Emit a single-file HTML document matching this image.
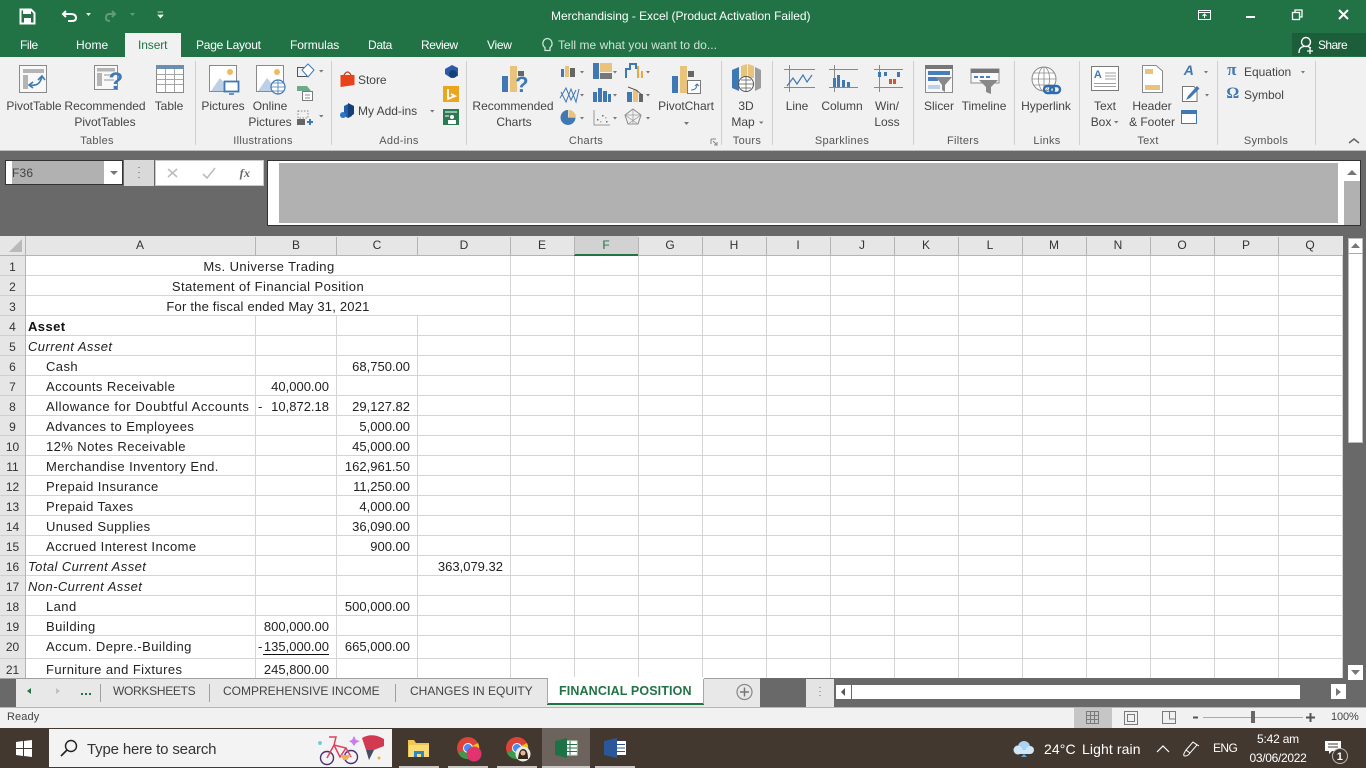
<!DOCTYPE html>
<html><head><meta charset="utf-8"><title>Merchandising - Excel</title>
<style>
html,body{margin:0;padding:0;width:1366px;height:768px;overflow:hidden;background:#696969}
body{position:relative;font-family:"Liberation Sans",sans-serif;font-size:13px;color:#222}
.b{position:absolute}
.t{position:absolute;white-space:nowrap;height:20px;line-height:20px;letter-spacing:.42px}
.c{transform:translateX(-50%)}
.w{color:#fff}
.r{font-size:12px;letter-spacing:-.02px;color:#444}
.g{font-size:11px;letter-spacing:.3px;color:#555}
.n{right:0;letter-spacing:0}
.B{right:1037px}.C{right:956px}.D{right:863px}
.ch{font-size:12px;color:#333;letter-spacing:0;top:235px}
.rh{font-size:12px;color:#333;left:0;width:25px;text-align:center;letter-spacing:0}
.tab{font-size:12px;color:#444;top:681px;letter-spacing:0}
svg{position:absolute;left:0;top:0}
</style></head><body>
<div class="b" style="left:0;top:0;width:1366px;height:57px;background:#217346"></div>
<div class="b" style="left:1292px;top:33px;width:74px;height:23px;background:#1d5e3a"></div>
<div class="b" style="left:125px;top:33px;width:56px;height:24px;background:#f1f1f1"></div>
<div class="b" style="left:0;top:57px;width:1366px;height:93px;background:#f1f1f1"></div>
<div class="b" style="left:0;top:150px;width:1366px;height:1px;background:#bdbdbd"></div>
<!-- formula bar -->
<div class="b" style="left:5px;top:160px;width:118px;height:25px;box-sizing:border-box;border:1px solid #333;background:#fff"></div>
<div class="b" style="left:12px;top:161px;width:92px;height:23px;background:#b1b1b1"></div>
<div class="b" style="left:124px;top:160px;width:30px;height:26px;background:#d9d9d9"></div>
<div class="b" style="left:155px;top:160px;width:109px;height:26px;background:#fff;box-shadow:0 0 0 1px #c8c8c8 inset"></div>
<div class="b" style="left:267px;top:160px;width:1094px;height:66px;box-sizing:border-box;border:1px solid #333;background:#fff"></div>
<div class="b" style="left:279px;top:163px;width:1059px;height:60px;background:#b1b1b1"></div>
<div class="b" style="left:1344px;top:181px;width:16px;height:44px;background:#b1b1b1"></div>
<!-- sheet -->
<div class="b" style="left:0;top:236px;width:1343px;height:19px;background:#e6e6e6"></div>
<div class="b" style="left:574px;top:236px;width:64px;height:18px;background:#d2d2d2"></div>
<div class="b" style="left:574px;top:254px;width:64px;height:2px;background:#217346"></div>
<div class="b" style="left:0;top:255px;width:25px;height:423px;background:#e6e6e6"></div>
<div class="b" style="left:25px;top:256px;width:1318px;height:422px;background:#fff"></div>
<svg width="1366" height="768" viewBox="0 0 1366 768" shape-rendering="crispEdges">
<g stroke="#d4d4d4" stroke-width="1" fill="none">
<path d="M25 275.5H1343M25 295.5H1343M25 315.5H1343M25 335.5H1343M25 355.5H1343M25 375.5H1343M25 395.5H1343M25 415.5H1343M25 435.5H1343M25 455.5H1343M25 475.5H1343M25 495.5H1343M25 515.5H1343M25 535.5H1343M25 555.5H1343M25 575.5H1343M25 595.5H1343M25 615.5H1343M25 635.5H1343M25 658.5H1343"/>
<path d="M255.5 316V678M336.5 316V678M417.5 316V678M510.5 256V678M574.5 256V678M638.5 256V678M702.5 256V678M766.5 256V678M830.5 256V678M894.5 256V678M958.5 256V678M1022.5 256V678M1086.5 256V678M1150.5 256V678M1214.5 256V678M1278.5 256V678M1342.5 256V678"/>
</g>
<g stroke="#b4b4b4" fill="none">
<path d="M0 255.5H574M638 255.5H1343M25.5 236V678"/>
<path d="M255.5 237V255M336.5 237V255M417.5 237V255M510.5 237V255M574.5 237V255M638.5 237V255M702.5 237V255M766.5 237V255M830.5 237V255M894.5 237V255M958.5 237V255M1022.5 237V255M1086.5 237V255M1150.5 237V255M1214.5 237V255M1278.5 237V255"/>
<path d="M0 275.5H25M0 295.5H25M0 315.5H25M0 335.5H25M0 355.5H25M0 375.5H25M0 395.5H25M0 415.5H25M0 435.5H25M0 455.5H25M0 475.5H25M0 495.5H25M0 515.5H25M0 535.5H25M0 555.5H25M0 575.5H25M0 595.5H25M0 615.5H25M0 635.5H25M0 658.5H25" stroke="#cfcfcf"/>
</g>
<path d="M263 654.5H329" stroke="#111" stroke-width="1"/>
<g shape-rendering="auto"><path d="M9 252L22 239V252Z" fill="#b9b9b9"/></g>
</svg>
<!-- v scrollbar -->
<div class="b" style="left:1348px;top:238px;width:15px;height:205px;background:#fff;box-shadow:0 0 0 1px #bbb inset"></div>
<div class="b" style="left:1348px;top:253px;width:15px;height:1px;background:#aaa"></div>
<div class="b" style="left:1348px;top:665px;width:15px;height:15px;background:#fff"></div>
<!-- tab bar -->
<div class="b" style="left:0;top:678px;width:760px;height:1px;background:#a0a0a0"></div>
<div class="b" style="left:16px;top:679px;width:744px;height:28px;background:#e8e8e8"></div>
<div class="b" style="left:548px;top:677px;width:156px;height:26px;background:#fff"></div>
<div class="b" style="left:547px;top:703px;width:157px;height:2px;background:#217346"></div>
<div class="b" style="left:547px;top:679px;width:1px;height:25px;background:#a8a8a8"></div>
<div class="b" style="left:703px;top:679px;width:1px;height:25px;background:#a8a8a8"></div>
<div class="b" style="left:806px;top:679px;width:28px;height:28px;background:#e4e4e4"></div>
<div class="b" style="left:836px;top:685px;width:15px;height:14px;background:#fff"></div>
<div class="b" style="left:852px;top:685px;width:448px;height:14px;background:#fff"></div>
<div class="b" style="left:1331px;top:684px;width:15px;height:15px;background:#fff"></div>
<div class="b" style="left:0;top:707px;width:1366px;height:21px;background:#f1f1f1;border-top:1px solid #b5b5b5;box-sizing:border-box"></div>
<div class="b" style="left:1074px;top:708px;width:38px;height:20px;background:#c6c6c6"></div>
<!-- taskbar -->
<div class="b" style="left:0;top:728px;width:1366px;height:40px;background:#43382f"></div>
<div class="b" style="left:49px;top:729px;width:343px;height:38px;background:#f3f3f3"></div>
<div class="b" style="left:542px;top:728px;width:48px;height:40px;background:#6b635c"></div>
<div class="b" style="left:399px;top:766px;width:40px;height:2px;background:#c9c6c4"></div>
<div class="b" style="left:448px;top:766px;width:40px;height:2px;background:#c9c6c4"></div>
<div class="b" style="left:497px;top:766px;width:40px;height:2px;background:#c9c6c4"></div>
<div class="b" style="left:542px;top:766px;width:48px;height:2px;background:#c9c6c4"></div>
<div class="b" style="left:595px;top:766px;width:40px;height:2px;background:#c9c6c4"></div>

<svg width="1366" height="768" viewBox="0 0 1366 768">
<!-- QAT -->
<path d="M20.5 9.5H31L34.5 13V23.5H20.5Z" fill="none" stroke="#fff" stroke-width="2"/><rect x="23" y="9" width="8" height="5" fill="#fff"/><rect x="24" y="18" width="7" height="5" fill="#fff"/>
<path d="M66 11L63 14L66 17M63.5 14H71Q76 14 76 18Q76 21 72 21H68" fill="none" stroke="#fff" stroke-width="2"/>
<path d="M86 13H91L88.5 16Z" fill="#e6f0ea"/>
<path d="M112 11L115 14L112 17M114 14H109Q106 14 106 18Q106 21 110 21" fill="none" stroke="#5f9c79" stroke-width="2"/>
<path d="M130 13H135L132.5 16Z" fill="#5f9c79"/>
<path d="M157.5 12H163M158 15H163L160.5 18Z" fill="#fff" stroke="#fff" stroke-width=".7"/>
<!-- Tell me bulb -->
<path d="M547 38.5a5 5 0 0 1 3 9v3h-5v-3a5 5 0 0 1 2-9z" fill="none" stroke="#cfe3d6" stroke-width="1.3"/>
<!-- window controls -->
<rect x="1198.5" y="10.5" width="12" height="9" fill="none" stroke="#fff"/><path d="M1198 12.5H1211" stroke="#fff"/><path d="M1204.5 18V14M1202.5 16L1204.5 14L1206.5 16" stroke="#fff" fill="none"/>
<rect x="1246" y="16" width="9" height="2" fill="#fff"/>
<rect x="1292.5" y="12.5" width="7" height="7" fill="none" stroke="#fff" stroke-width="1.3"/><path d="M1295 12V10H1302V17H1300" fill="none" stroke="#fff" stroke-width="1.3"/>
<path d="M1339 10L1348 19M1348 10L1339 19" stroke="#fff" stroke-width="2"/>
<circle cx="1306" cy="42" r="4.5" fill="none" stroke="#fff" stroke-width="1.4"/><path d="M1299 53Q1299 47 1304 46.5M1308 46.5L1311 48M1307 51H1313M1310 48V54" fill="none" stroke="#fff" stroke-width="1.3"/>

<!-- separators -->
<g stroke="#d0d0d0"><path d="M195.5 61V145M331.5 61V145M466.5 61V145M721.5 61V145M772.5 61V145M913.5 61V145M1014.5 61V145M1079.5 61V145M1217.5 61V145M1315.5 61V145"/></g>

<!-- PivotTable -->
<rect x="19.5" y="65.5" width="27" height="27" fill="#f8f8f8" stroke="#8a8a8a"/><rect x="23" y="69" width="21" height="4" fill="#b4b4b4"/><rect x="23" y="75" width="5" height="14" fill="#b4b4b4"/>
<path d="M30 85Q40 87 42 76M38 80L42 76L45 80M33 82L29 85L33 88" fill="none" stroke="#3f78b3" stroke-width="1.6"/>
<!-- Recommended pivot -->
<rect x="94.5" y="65.5" width="23" height="24" fill="#f8f8f8" stroke="#8a8a8a"/><rect x="97" y="68" width="18" height="3.5" fill="#b4b4b4"/><rect x="97" y="73" width="5" height="13" fill="#b4b4b4"/><rect x="104" y="74" width="10" height="2" fill="#c7c7c7"/><rect x="104" y="79" width="10" height="2" fill="#c7c7c7"/>
<!-- Table -->
<rect x="156.5" y="65.5" width="27" height="27" fill="#fff" stroke="#8a8a8a"/><rect x="156" y="65" width="28" height="4" fill="#6a8fb0"/><path d="M157 74.5H183M157 79.5H183M157 84.5H183M165.5 69V92M174.5 69V92" stroke="#a5a5a5"/>
<!-- Pictures -->
<rect x="209.5" y="65.5" width="27" height="26" fill="#fff" stroke="#8a8a8a"/><circle cx="230" cy="72" r="3" fill="#eebb63"/><path d="M211 91L220 78L231 91Z" fill="#bcd0e6"/><rect x="224.5" y="81.5" width="14" height="10" fill="#fff" stroke="#3f78b3" stroke-width="1.8"/><path d="M229 94H234" stroke="#3f78b3" stroke-width="1.5"/>
<!-- Online -->
<rect x="256.5" y="65.5" width="27" height="26" fill="#fff" stroke="#8a8a8a"/><circle cx="277" cy="72" r="3" fill="#eebb63"/><path d="M258 91L267 78L278 91Z" fill="#bcd0e6"/><circle cx="278" cy="87" r="7" fill="#fff" stroke="#3f78b3" stroke-width="1.2"/><path d="M271 87H285M278 80V94M272.5 83H283.5M272.5 91H283.5" stroke="#3f78b3" stroke-width=".8" fill="none"/>
<!-- Shapes etc -->
<rect x="297.5" y="67.5" width="9" height="9" fill="none" stroke="#555"/><path d="M308 64L314 70L308 77L302 70Z" fill="#fff" stroke="#3f78b3"/><path d="M319 70H323.5L321.25 72.5Z" fill="#777"/>
<path d="M297 86H307L311 91H297Z" fill="#6ea98b"/><rect x="302.5" y="91.5" width="10" height="9" fill="#fff" stroke="#7a7a7a"/><path d="M305 95H310M305 98H310" stroke="#888"/>
<rect x="298" y="111" width="10" height="7" fill="none" stroke="#888" stroke-dasharray="1.5 1.5"/><rect x="297" y="119" width="8" height="6" fill="#666"/><path d="M307 122H313M310 119V125" stroke="#3f78b3" stroke-width="2"/><path d="M319 115H323.5L321.25 117.5Z" fill="#777"/>
<!-- Store -->
<path d="M340.5 75H354.5V85L340.5 87Z" fill="#e8421c"/><path d="M344 75Q347.5 69 351 75" fill="none" stroke="#c53a18" stroke-width="1.3"/>
<path d="M344 106L348 104V110L352 112L352 116L348 118L344 116Z" fill="#1f5fa8"/><circle cx="343" cy="115" r="3" fill="#2977c9"/><path d="M348 103L354 106V114L348 118Z" fill="#173f77"/>
<path d="M430 110H434.5L432.25 112.5Z" fill="#777"/>
<path d="M445 69L452 65L458 68V76L451 78L445 74Z" fill="#2a5aa8"/><circle cx="453" cy="74" r="4" fill="#173f77"/>
<rect x="443" y="86" width="16" height="16" fill="#eba620"/><path d="M448 89V99L455 96L451 94" fill="none" stroke="#fff" stroke-width="1.8"/>
<rect x="443" y="109" width="16" height="16" fill="#2c7a52"/><circle cx="452" cy="117" r="2" fill="#fff"/><path d="M448 124V120H456V124" fill="#fff"/><path d="M445 112H457M445 116H449" stroke="#fff"/>
<!-- Recommended Charts -->
<rect x="502" y="76" width="6" height="16" fill="#3f78b3"/><rect x="510" y="66" width="7" height="26" fill="#e9c27b"/><rect x="518" y="71" width="6" height="5" fill="#666"/>
<!-- small chart icons -->
<rect x="561" y="69" width="3" height="8" fill="#3f78b3"/><rect x="565" y="66" width="4" height="11" fill="#e9c27b"/><rect x="570" y="68" width="5" height="9" fill="#666"/>
<path d="M580 71H584L582 73.5Z" fill="#777"/>
<rect x="593" y="63" width="6" height="16" fill="#3f78b3"/><rect x="600" y="63" width="12" height="9" fill="#e9c27b"/><rect x="600" y="73" width="12" height="6" fill="#777"/>
<path d="M613 71H617L615 73.5Z" fill="#777"/>
<path d="M626 78V69H630V64H636V69" fill="none" stroke="#3f78b3" stroke-width="2"/><path d="M638 66V78M642 71V78" stroke="#e9a93f" stroke-width="2"/><path d="M646 71H650L648 73.5Z" fill="#777"/>
<path d="M561 92L566 102L571 89L576 102L579 89M560 98L566 88L571 100L576 90" fill="none" stroke="#3f78b3"/><path d="M580 94H584L582 96.5Z" fill="#777"/>
<rect x="593" y="92" width="4" height="10" fill="#3f78b3"/><rect x="598" y="88" width="4" height="14" fill="#3f78b3"/><rect x="603" y="91" width="4" height="11" fill="#3f78b3"/><rect x="608" y="94" width="3" height="8" fill="#3f78b3"/><path d="M613 94H617L615 96.5Z" fill="#777"/>
<rect x="627" y="92" width="5" height="10" fill="#3f78b3"/><rect x="633" y="90" width="5" height="12" fill="#e9c27b"/><rect x="639" y="94" width="4" height="8" fill="#666"/><path d="M628 87L636 90L642 95" fill="none" stroke="#555"/><path d="M646 94H650L648 96.5Z" fill="#777"/>
<path d="M568 110A7.5 7.5 0 1 0 575.5 117.5H568Z" fill="#3f78b3"/><path d="M568.5 110A7.5 7.5 0 0 1 576 117H568.5Z" fill="#e9c27b"/><path d="M580 117H584L582 119.5Z" fill="#777"/>
<path d="M594 110V125H610" fill="none" stroke="#999"/><g fill="#3f78b3"><rect x="597" y="119" width="1.5" height="1.5"/><rect x="602" y="115" width="1.5" height="1.5"/><rect x="606" y="121" width="1.5" height="1.5"/></g><g fill="#e9a93f"><rect x="600" y="121" width="1.5" height="1.5"/><rect x="605" y="117" width="1.5" height="1.5"/></g><path d="M613 117H617L615 119.5Z" fill="#777"/>
<path d="M633 109L641 115L638 124H628L625 115Z" fill="none" stroke="#888"/><path d="M633 109V124M625 115L641 115M628 124L638 124M628 124L641 115M638 124L625 115" stroke="#999" stroke-width=".7" fill="none"/><path d="M646 117H650L648 119.5Z" fill="#777"/>
<!-- PivotChart -->
<rect x="672" y="76" width="6" height="17" fill="#3f78b3"/><rect x="680" y="66" width="7" height="27" fill="#e9c27b"/><rect x="688" y="71" width="6" height="6" fill="#666"/><rect x="687.5" y="80.5" width="13" height="13" fill="#fff" stroke="#7a7a7a"/><path d="M691 90Q697 90 697 84M695 86L697 84L699 86" stroke="#3f78b3" fill="none"/>
<path d="M684 122H689L686.5 125Z" fill="#777"/>
<!-- 3D map -->
<path d="M732 70L739 67V91L732 88Z" fill="#3f78b3"/><path d="M741 66L747 64V78H741Z" fill="#e9c27b"/><path d="M748 64L754 66V78H748Z" fill="#e9c27b"/><path d="M755 67L761 70V88L755 91Z" fill="#9c9c9c"/><circle cx="746" cy="84" r="7.5" fill="#fff" stroke="#555"/><path d="M739 84H753M746 77V91M741 80H751M741 88H751" stroke="#555" stroke-width=".7"/>
<path d="M759 121.5H763.5L761.25 124Z" fill="#777"/>
<!-- Sparklines -->
<g stroke="#888" fill="none"><path d="M784 69.5H815M784 87.5H815M789.5 65V92M829 69.5H858M829 87.5H858M834.5 65V92M874 69.5H903M874 87.5H903M879.5 65V92"/></g>
<path d="M787 86L793 78L797 84L803 75L807 82L812 75" fill="none" stroke="#3f78b3" stroke-width="1.2"/>
<g fill="#3f78b3"><rect x="833" y="78" width="3" height="9"/><rect x="837" y="75" width="3" height="12"/><rect x="842" y="80" width="3" height="7"/><rect x="847" y="82" width="3" height="5"/></g>
<g fill="#3f78b3"><rect x="878" y="72" width="3" height="5"/><rect x="884" y="72" width="3" height="4"/><rect x="897" y="72" width="3" height="5"/></g><g fill="#c8593a"><rect x="889" y="79" width="3" height="5"/><rect x="893" y="79" width="3" height="5"/></g>
<!-- Slicer -->
<rect x="925.5" y="65.5" width="27" height="27" fill="#f8f8f8" stroke="#8a8a8a"/><rect x="925" y="65" width="28" height="4" fill="#777"/><rect x="928" y="71" width="22" height="4" fill="#4a7ebb"/><rect x="928" y="77" width="10" height="4" fill="#4a7ebb"/><rect x="928" y="85" width="12" height="4" fill="#bcd0e6"/><path d="M936 77H952L945 85V92L942 90V85Z" fill="#888"/>
<!-- Timeline -->
<rect x="971" y="69" width="28" height="14" fill="#f8f8f8" stroke="#8a8a8a"/><rect x="971" y="69" width="28" height="4" fill="#777"/><path d="M974 77H978M980 77H984M986 77H990" stroke="#4a7ebb" stroke-width="2"/><path d="M979 80H998L991 87V94L986 92V87Z" fill="#888"/>
<!-- Hyperlink -->
<circle cx="1044" cy="79" r="12" fill="#fff" stroke="#8a8a8a"/><path d="M1032 79H1056M1044 67V91M1034 73H1054M1034 85H1054" stroke="#8a8a8a" stroke-width=".8"/><ellipse cx="1044" cy="79" rx="5.5" ry="12" fill="none" stroke="#8a8a8a" stroke-width=".8"/>
<rect x="1044" y="86" width="10" height="7" rx="3.5" fill="none" stroke="#2d6cb0" stroke-width="2.4"/><rect x="1050" y="86" width="10" height="7" rx="3.5" fill="none" stroke="#2d6cb0" stroke-width="2.4"/>
<!-- Text box -->
<rect x="1091.5" y="66.5" width="27" height="24" fill="#fff" stroke="#7a7a7a"/><path d="M1105 73H1116M1105 76H1116M1105 79H1116M1094 83.5H1116M1094 86.5H1116" stroke="#a0a0a0"/>
<path d="M1114 121H1118.5L1116.25 123.5Z" fill="#777"/>
<!-- Header footer -->
<path d="M1142.5 65.5H1156L1162.5 71V92.5H1142.5Z" fill="#fff" stroke="#8a8a8a"/><rect x="1145" y="69" width="8" height="5" fill="#e9c27b"/><rect x="1145" y="85" width="15" height="5" fill="#e9c27b"/>
<path d="M1204 71H1208L1206 73.5Z" fill="#777"/>
<path d="M1182.5 86.5H1194L1197 90V101.5H1182.5Z" fill="#fff" stroke="#777"/><path d="M1186 100L1188 96L1197 86L1199.5 88.5L1190 98Z" fill="#3f78b3"/><path d="M1205 94H1209L1207 96.5Z" fill="#777"/>
<rect x="1181.5" y="110.5" width="15" height="13" fill="#fff" stroke="#3f78b3"/><rect x="1181" y="110" width="16" height="4" fill="#3f78b3"/>
<path d="M1301 71H1305L1303 73.5Z" fill="#777"/>
<path d="M1349 143L1354 139L1359 143" fill="none" stroke="#666" stroke-width="1.5"/>
<!-- dialog launcher -->
<path d="M711 139H716M711 139V144M713 141L717 145M717 142V145H714" stroke="#888" fill="none"/>
<!-- name box arrows & fx -->
<path d="M110 171H118L114 175Z" fill="#777"/>
<path d="M139 167V168M139 172V173M139 177V178" stroke="#999" stroke-width="2"/>
<path d="M168 169L177 177M177 169L168 177" stroke="#bdbdbd" stroke-width="1.6"/>
<path d="M203 174L207 178L215 168" stroke="#bdbdbd" stroke-width="1.6" fill="none"/>
<path d="M1347 175L1352 170L1357 175Z" fill="#777"/>
<!-- sheet scroll arrows -->
<path d="M1351 248L1355.5 243L1360 248Z" fill="#777"/><path d="M1351 670L1355.5 675L1360 670Z" fill="#777"/>
<!-- tab nav -->
<path d="M31 688V694L27 691Z" fill="#217346"/><path d="M56 688V694L60 691Z" fill="#c0c0c0"/>
<g fill="#217346"><rect x="81" y="693" width="2" height="2"/><rect x="85" y="693" width="2" height="2"/><rect x="89" y="693" width="2" height="2"/></g>
<path d="M100.5 684V702M209.5 684V702M395.5 684V702" stroke="#a0a0a0"/>
<circle cx="744.5" cy="692" r="7.5" fill="none" stroke="#888" stroke-width="1.2"/><path d="M740 692H749M744.5 687.5V696.5" stroke="#777" stroke-width="1.5"/>
<path d="M820 687V688M820 691V692M820 695V696" stroke="#999" stroke-width="1.5"/>
<path d="M845 688V696L841 692Z" fill="#555"/><path d="M1336 688V696L1341 692Z" fill="#777"/>
<!-- status -->
<g stroke="#7a7a7a" fill="none" shape-rendering="crispEdges"><rect x="1086.5" y="711.5" width="12" height="12"/><path d="M1086 715.5H1099M1086 719.5H1099M1090.5 711V724M1094.5 711V724"/>
<rect x="1124.5" y="711.5" width="13" height="13"/><rect x="1127.5" y="714.5" width="7" height="7"/>
<rect x="1162.5" y="711.5" width="13" height="12"/><path d="M1169.5 711V719H1175"/></g>
<path d="M1193 717.5H1198" stroke="#555" stroke-width="2"/><path d="M1203 717.5H1303" stroke="#aaa"/><rect x="1251" y="711" width="4" height="12" fill="#666"/><path d="M1306 717.5H1315M1310.5 713V722" stroke="#555" stroke-width="2"/>
<!-- taskbar -->
<g fill="#fff"><path d="M16 742L23 741V748H16Z"/><path d="M24 741L32 740V748H24Z"/><path d="M16 749H23V756L16 755Z"/><path d="M24 749H32V757L24 756Z"/></g>
<circle cx="71" cy="746" r="5.5" fill="none" stroke="#222" stroke-width="1.4"/><path d="M67 750L61 756" stroke="#222" stroke-width="1.6"/>
<!-- bike -->
<circle cx="327" cy="758" r="6.5" fill="none" stroke="#4a2f73" stroke-width="1.4"/><circle cx="351" cy="757" r="6.5" fill="none" stroke="#4a2f73" stroke-width="1.4"/><path d="M327 758L334 745L346 748L351 757M334 745L340 757L346 748M329 737H336L334 745" fill="none" stroke="#e0415f" stroke-width="1.5"/><path d="M341 755H351L347 760H343Z" fill="#f1ad55"/><path d="M354 736L356 740L360 741L356 743L354 746L352 743L349 741L352 740Z" fill="#c77bec"/><circle cx="320" cy="743" r="2" fill="#6fd1d6"/>
<path d="M362 738Q372 732 384 739L384 746L374 750L366 750Z" fill="#d23a52"/><path d="M366 750L369 760L374 750Z" fill="#4a4a62"/><circle cx="379" cy="758" r="1.5" fill="#efb33e"/>
<!-- folder -->
<path d="M408 740H414L416 743H429V757H408Z" fill="#f1c64e"/><rect x="409" y="745" width="20" height="12" fill="#f8dc7a"/><rect x="414" y="751" width="10" height="6" fill="#2f86c5"/><rect x="417" y="754" width="4" height="3" fill="#f8dc7a"/>
<!-- chrome 1 -->
<circle cx="468" cy="748" r="11" fill="#db4437"/><path d="M468 748L458 753A11 11 0 0 0 473 758Z" fill="#3a9c4a"/><path d="M468 748L478 743A11 11 0 0 1 473 758Z" fill="#f4c20d"/><circle cx="468" cy="748" r="4.5" fill="#4a8af4" stroke="#fff"/><circle cx="474" cy="754" r="7.5" fill="#e0336f"/>
<!-- chrome 2 -->
<circle cx="517" cy="748" r="11" fill="#db4437"/><path d="M517 748L507 753A11 11 0 0 0 522 758Z" fill="#3a9c4a"/><path d="M517 748L527 743A11 11 0 0 1 522 758Z" fill="#f4c20d"/><circle cx="517" cy="748" r="4.5" fill="#4a8af4" stroke="#fff"/><circle cx="523" cy="754" r="7.5" fill="#efe9e4"/><path d="M518 759Q519 749 523 749Q528 749 528 759Z" fill="#33261f"/><circle cx="523" cy="753" r="2.5" fill="#e7b795"/>
<!-- excel -->
<rect x="564" y="741" width="13" height="14" fill="#fff" stroke="#cfe8d8"/><path d="M564 744.5H577M564 748H577M564 751.5H577M570 741V755" stroke="#217346"/><path d="M555 741L567 738V758L555 755Z" fill="#1d7245"/>
<!-- word -->
<rect x="613" y="741" width="13" height="14" fill="#fff"/><path d="M616 744.5H625M616 748H625M616 751.5H625" stroke="#2b579a"/><path d="M604 741L617 738V758L604 755Z" fill="#2b579a"/>
<!-- weather -->
<circle cx="1024" cy="747" r="6" fill="#a9d3f2"/><circle cx="1018" cy="750" r="4.5" fill="#cfe6f7"/><circle cx="1030" cy="750" r="4" fill="#cfe6f7"/><rect x="1018" y="750" width="12" height="4" fill="#cfe6f7"/><path d="M1024 754L1021 757H1027Z" fill="#56a7e8"/>
<path d="M1157 752L1163 746L1169 752" fill="none" stroke="#fff" stroke-width="1.2"/>
<path d="M1186 750L1193 742L1197 745L1190 753ZM1193 742L1199 746M1186 750Q1182 756 1185 756Q1188 756 1190 753" fill="none" stroke="#fff" stroke-width="1"/>
<path d="M1325 741H1341V751H1332L1329 754V751H1325Z" fill="#fff"/><path d="M1328 744H1338M1328 747H1338" stroke="#43382f"/><circle cx="1340" cy="756" r="7.5" fill="#43382f" stroke="#bbb"/>
</svg>

<!-- title & tabs -->
<div class="t w" style="left:551px;top:6px;font-size:12px;letter-spacing:-.04px">Merchandising - Excel (Product Activation Failed)</div>
<div class="t w" style="left:20px;top:35px;font-size:12px;letter-spacing:-.4px">File</div>
<div class="t w" style="left:76px;top:35px;font-size:12px;letter-spacing:.05px">Home</div>
<div class="t" style="left:138px;top:35px;font-size:12px;letter-spacing:-.1px;color:#217346">Insert</div>
<div class="t w" style="left:196px;top:35px;font-size:12px;letter-spacing:-.24px">Page Layout</div>
<div class="t w" style="left:290px;top:35px;font-size:12px;letter-spacing:-.1px">Formulas</div>
<div class="t w" style="left:368px;top:35px;font-size:12px;letter-spacing:-.35px">Data</div>
<div class="t w" style="left:421px;top:35px;font-size:12px;letter-spacing:-.45px">Review</div>
<div class="t w" style="left:487px;top:35px;font-size:12px;letter-spacing:-.3px">View</div>
<div class="t" style="left:558px;top:35px;font-size:12px;letter-spacing:.03px;color:#cfe3d6">Tell me what you want to do...</div>
<div class="t w" style="left:1318px;top:35px;font-size:12px;letter-spacing:-.6px">Share</div>

<!-- ribbon labels -->
<div class="t r c" style="left:34px;top:96px">PivotTable</div>
<div class="t r c" style="left:105px;top:96px">Recommended</div>
<div class="t r c" style="left:105px;top:112px">PivotTables</div>
<div class="t r c" style="left:169px;top:96px">Table</div>
<div class="t r c" style="left:223px;top:96px">Pictures</div>
<div class="t r c" style="left:270px;top:96px">Online</div>
<div class="t r c" style="left:270px;top:112px">Pictures</div>
<div class="t r" style="left:358px;top:70px">Store</div>
<div class="t r" style="left:358px;top:101px">My Add-ins</div>
<div class="t r c" style="left:513px;top:96px">Recommended</div>
<div class="t r c" style="left:514px;top:112px">Charts</div>
<div class="t r c" style="left:686px;top:96px">PivotChart</div>
<div class="t r c" style="left:746px;top:96px">3D</div>
<div class="t r c" style="left:743px;top:112px">Map</div>
<div class="t r c" style="left:797px;top:96px">Line</div>
<div class="t r c" style="left:842px;top:96px">Column</div>
<div class="t r c" style="left:887px;top:96px">Win/</div>
<div class="t r c" style="left:887px;top:112px">Loss</div>
<div class="t r c" style="left:939px;top:96px">Slicer</div>
<div class="t r c" style="left:984px;top:96px">Timeline</div>
<div class="t r c" style="left:1046px;top:96px">Hyperlink</div>
<div class="t r c" style="left:1105px;top:96px">Text</div>
<div class="t r c" style="left:1101px;top:112px">Box</div>
<div class="t r c" style="left:1152px;top:96px">Header</div>
<div class="t r c" style="left:1152px;top:112px">&amp; Footer</div>
<div class="t r" style="left:1244px;top:62px">Equation</div>
<div class="t r" style="left:1244px;top:85px">Symbol</div>
<div class="t c" style="left:1232px;top:60px;font:bold 17px/20px 'Liberation Serif',serif;color:#3f78b3">π</div>
<div class="t c" style="left:1233px;top:84px;font:bold 16px/20px 'Liberation Serif',serif;color:#3f78b3">Ω</div>
<div class="t c" style="left:1189px;top:60px;font:italic bold 14px/20px 'Liberation Sans',sans-serif;color:#3f78b3">A</div>
<div class="t c" style="left:1098px;top:65px;font:bold 11px/20px 'Liberation Sans',sans-serif;color:#3f78b3">A</div>
<div class="t c" style="left:116px;top:70px;font:bold 24px/24px 'Liberation Sans',sans-serif;color:#3f78b3;height:24px">?</div>
<div class="t c" style="left:522px;top:74px;font:bold 22px/22px 'Liberation Sans',sans-serif;color:#3f78b3;height:22px">?</div>
<div class="t g c" style="left:97px;top:131px">Tables</div>
<div class="t g c" style="left:263px;top:131px">Illustrations</div>
<div class="t g c" style="left:399px;top:131px">Add-ins</div>
<div class="t g c" style="left:586px;top:131px">Charts</div>
<div class="t g c" style="left:747px;top:131px">Tours</div>
<div class="t g c" style="left:842px;top:131px">Sparklines</div>
<div class="t g c" style="left:963px;top:131px">Filters</div>
<div class="t g c" style="left:1047px;top:131px">Links</div>
<div class="t g c" style="left:1148px;top:131px">Text</div>
<div class="t g c" style="left:1266px;top:131px">Symbols</div>

<div class="t" style="left:12px;top:163px;font-size:12px;color:#444;letter-spacing:.2px">F36</div>
<div class="t c" style="left:245px;top:163px;font:italic bold 12px/20px 'Liberation Serif',serif;color:#666">fx</div>

<!-- column headers -->
<div class="t ch c" style="left:140px">A</div><div class="t ch c" style="left:296px">B</div><div class="t ch c" style="left:377px">C</div><div class="t ch c" style="left:464px">D</div><div class="t ch c" style="left:542px">E</div><div class="t ch c" style="left:606px;color:#217346">F</div><div class="t ch c" style="left:670px">G</div><div class="t ch c" style="left:734px">H</div><div class="t ch c" style="left:798px">I</div><div class="t ch c" style="left:862px">J</div><div class="t ch c" style="left:926px">K</div><div class="t ch c" style="left:990px">L</div><div class="t ch c" style="left:1054px">M</div><div class="t ch c" style="left:1118px">N</div><div class="t ch c" style="left:1182px">O</div><div class="t ch c" style="left:1246px">P</div><div class="t ch c" style="left:1310px">Q</div>
<div style="position:absolute;left:0;top:1px;width:1366px;height:767px">
<!-- row headers -->
<div class="t rh" style="top:256px">1</div><div class="t rh" style="top:276px">2</div><div class="t rh" style="top:296px">3</div><div class="t rh" style="top:316px">4</div><div class="t rh" style="top:336px">5</div><div class="t rh" style="top:356px">6</div><div class="t rh" style="top:376px">7</div><div class="t rh" style="top:396px">8</div><div class="t rh" style="top:416px">9</div><div class="t rh" style="top:436px">10</div><div class="t rh" style="top:456px">11</div><div class="t rh" style="top:476px">12</div><div class="t rh" style="top:496px">13</div><div class="t rh" style="top:516px">14</div><div class="t rh" style="top:536px">15</div><div class="t rh" style="top:556px">16</div><div class="t rh" style="top:576px">17</div><div class="t rh" style="top:596px">18</div><div class="t rh" style="top:616px">19</div><div class="t rh" style="top:636px">20</div><div class="t rh" style="top:659px">21</div>
<!-- cells -->
<div class="t c" style="left:269px;top:256px">Ms. Universe Trading</div>
<div class="t c" style="left:268px;top:276px">Statement of Financial Position</div>
<div class="t c" style="left:268px;top:296px;letter-spacing:.2px">For the fiscal ended May 31, 2021</div>
<div class="t" style="left:28px;top:316px;font-weight:bold;color:#111">Asset</div>
<div class="t" style="left:28px;top:336px;font-style:italic">Current Asset</div>
<div class="t" style="left:46px;top:356px">Cash</div>
<div class="t" style="left:46px;top:376px">Accounts Receivable</div>
<div class="t" style="left:46px;top:396px;letter-spacing:.55px">Allowance for Doubtful Accounts</div>
<div class="t" style="left:46px;top:416px">Advances to Employees</div>
<div class="t" style="left:46px;top:436px">12% Notes Receivable</div>
<div class="t" style="left:46px;top:456px">Merchandise Inventory End.</div>
<div class="t" style="left:46px;top:476px">Prepaid Insurance</div>
<div class="t" style="left:46px;top:496px">Prepaid Taxes</div>
<div class="t" style="left:46px;top:516px">Unused Supplies</div>
<div class="t" style="left:46px;top:536px">Accrued Interest Income</div>
<div class="t" style="left:28px;top:556px;font-style:italic">Total Current Asset</div>
<div class="t" style="left:28px;top:576px;font-style:italic">Non-Current Asset</div>
<div class="t" style="left:46px;top:596px">Land</div>
<div class="t" style="left:46px;top:616px">Building</div>
<div class="t" style="left:46px;top:636px">Accum. Depre.-Building</div>
<div class="t" style="left:46px;top:659px">Furniture and Fixtures</div>

<div class="t n C" style="top:356px">68,750.00</div>
<div class="t n B" style="top:376px">40,000.00</div>
<div class="t" style="left:258px;top:396px">-</div>
<div class="t n B" style="top:396px">10,872.18</div>
<div class="t n C" style="top:396px">29,127.82</div>
<div class="t n C" style="top:416px">5,000.00</div>
<div class="t n C" style="top:436px">45,000.00</div>
<div class="t n C" style="top:456px">162,961.50</div>
<div class="t n C" style="top:476px">11,250.00</div>
<div class="t n C" style="top:496px">4,000.00</div>
<div class="t n C" style="top:516px">36,090.00</div>
<div class="t n C" style="top:536px">900.00</div>
<div class="t n D" style="top:556px">363,079.32</div>
<div class="t n C" style="top:596px">500,000.00</div>
<div class="t n B" style="top:616px">800,000.00</div>
<div class="t" style="left:258px;top:636px">-</div>
<div class="t n B" style="top:636px">135,000.00</div>
<div class="t n C" style="top:636px">665,000.00</div>
<div class="t n B" style="top:659px">245,800.00</div>
</div>

<!-- sheet tabs -->
<div class="t tab" style="left:113px;letter-spacing:-.3px">WORKSHEETS</div>
<div class="t tab" style="left:223px">COMPREHENSIVE INCOME</div>
<div class="t tab" style="left:410px">CHANGES IN EQUITY</div>
<div class="t tab" style="left:559px;font-size:12.5px;font-weight:bold;color:#217346;letter-spacing:.13px">FINANCIAL POSITION</div>
<div class="t" style="left:7px;top:707px;font-size:11px;color:#444;letter-spacing:.1px">Ready</div>
<div class="t" style="left:1331px;top:707px;font-size:11px;color:#444;letter-spacing:-.1px">100%</div>
<!-- taskbar text -->
<div class="t" style="left:87px;top:740px;font-size:15px;color:#333;letter-spacing:-.17px">Type here to search</div>
<div class="t w" style="left:1044px;top:739px;font-size:14px;letter-spacing:.1px">24°C</div>
<div class="t w" style="left:1082px;top:739px;font-size:14px;letter-spacing:.1px">Light rain</div>
<div class="t w" style="left:1213px;top:738px;font-size:12px;letter-spacing:-.6px">ENG</div>
<div class="t w c" style="left:1278px;top:729px;font-size:12px;letter-spacing:-.2px">5:42 am</div>
<div class="t w c" style="left:1278px;top:748px;font-size:12px;letter-spacing:-.3px">03/06/2022</div>
<div class="t w c" style="left:1340px;top:747px;font-size:11px;font-weight:bold">1</div>
</body></html>
